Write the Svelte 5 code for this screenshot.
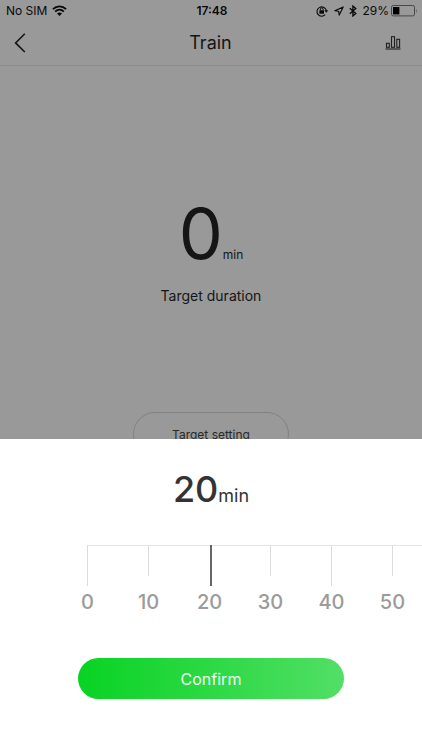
<script>
  const values = [0, 10, 20, 30, 40, 50];
  const spacing = 61;
  let minutes = $state(20);
  let offset = $derived((minutes / 10) * spacing + 32);
</script>

<div class="screen">
  <div class="status">
    <div class="carrier">
      <span>No SIM</span>
      <svg width="15" height="11" viewBox="0 0 15 11" fill="none" stroke="#090909" stroke-width="1.9" aria-hidden="true">
        <path d="M0.9 4.1C4.7 .4 10.3 .4 14.1 4.1" />
        <path d="M3.2 6.6C5.7 4.2 9.3 4.2 11.8 6.6" />
        <path d="M5 8.6Q7.5 6.5 10 8.6L7.5 11Z" fill="#090909" stroke="none" />
      </svg>
    </div>
    <strong>17:48</strong>
    <div class="indicators">
      <svg width="13" height="12" viewBox="0 0 13 12" fill="none" stroke="#090909" aria-hidden="true">
        <path d="M9.2 9.7A4.7 4.7 0 1 1 10.2 5.2" stroke-width="1.1" />
        <path d="M8.4 5.2H12.2L10.3 7.8Z" fill="#090909" stroke="none" />
        <rect x="3.4" y="5.3" width="4.6" height="3.4" fill="#090909" stroke="none" />
        <path d="M4.4 5.5V4.2a1.3 1.3 0 0 1 2.6 0V5.5" />
      </svg>
      <svg width="10" height="10" viewBox="0 0 10 10" fill="none" stroke="#090909" stroke-width="1.1" stroke-linejoin="round" aria-hidden="true">
        <path d="M9.2 .9L.8 4.8L4.6 5.2L5.2 9.1Z" />
      </svg>
      <svg width="8" height="12" viewBox="0 0 8 12" fill="none" stroke="#090909" stroke-width="1.3" aria-hidden="true">
        <path d="M.8 3.2L6.8 8.6L3.9 11V1L6.8 3.4L.8 8.8" />
      </svg>
      <span class="charge">29%</span>
      <svg width="27" height="12" viewBox="0 0 27 12" aria-hidden="true">
        <rect x=".5" y=".5" width="23" height="10.4" rx="1.8" fill="none" stroke="#484848" />
        <rect x="2" y="2" width="6.4" height="7.4" fill="#000" />
        <path d="M25 4V7.8Q26.4 5.9 25 4Z" fill="#484848" />
      </svg>
    </div>
  </div>

  <header>
    <button class="icon" aria-label="Back">
      <svg width="12" height="20" viewBox="0 0 12 20" fill="none" stroke="#151515" stroke-width="1.6" aria-hidden="true">
        <path d="M10.8 .8L1.6 9.9L10.8 19" />
      </svg>
    </button>
    <h1>Train</h1>
    <button class="icon" aria-label="Statistics">
      <svg width="16" height="14" viewBox="0 0 16 14" fill="none" stroke="#202020" stroke-width="1.1" aria-hidden="true">
        <path d="M.5 13H15.5" />
        <rect x="1.5" y="7.3" width="2.8" height="4" />
        <rect x="6.5" y=".7" width="3" height="10.6" />
        <rect x="11.8" y="3.3" width="2.8" height="8" />
      </svg>
    </button>
  </header>

  <main>
    <div class="total"><span class="zero">0</span><span class="unit">min</span></div>
    <p>Target duration</p>
    <button class="setting">Target setting</button>
  </main>

  <section class="sheet" aria-label="Target setting">
    <div class="chosen"><span class="number">{minutes}</span><span class="suffix">min</span></div>
    <div class="ruler">
      <ol style="margin-left: calc(50% - {offset}px)">
        {#each values as value}
          <li class:long={value % 40 === 0} class:current={value === minutes}>{value}</li>
        {/each}
      </ol>
      <span class="marker"></span>
      <input type="range" min="0" max="50" step="10" bind:value={minutes} aria-label="Target duration in minutes" />
    </div>
    <button class="confirm">Confirm</button>
  </section>
</div>

<style>
  :global(body) {
    margin: 0;
    background: #999;
  }

  .screen {
    display: flex;
    flex-direction: column;
    min-height: 100vh;
    font-family: Inter, "Liberation Sans", sans-serif;
    color: #151515;
    background: #999;
    overflow: hidden;
  }

  button {
    font: inherit;
    color: inherit;
    cursor: pointer;
  }

  svg {
    display: block;
  }

  .status {
    display: grid;
    grid-template-columns: 1fr auto 1fr;
    align-items: center;
    height: 21px;
    padding: 0 4px 1px 6px;
    font-size: 12px;
    color: #090909;
  }

  .status strong {
    font-weight: 600;
  }

  .carrier,
  .indicators {
    display: flex;
    align-items: center;
    gap: 5px;
  }

  .indicators {
    justify-content: flex-end;
  }

  .charge {
    margin-right: -3px;
  }

  header {
    display: flex;
    align-items: center;
    justify-content: space-between;
    height: 43px;
    padding: 0 8px 0 7px;
    border-bottom: 1px solid #8b8b8b;
  }

  .icon {
    display: grid;
    place-items: center;
    width: 26px;
    height: 40px;
    margin-bottom: 2px;
    padding: 0;
    border: 0;
    background: none;
  }

  .icon:last-child {
    width: 42px;
  }

  .icon:first-child {
    margin-right: 16px;
  }

  h1 {
    margin: 0 0 2px;
    font-size: 18px;
    font-weight: 400;
  }

  main {
    display: flex;
    flex-direction: column;
    align-items: center;
    padding-top: 128px;
  }

  .total {
    display: flex;
    align-items: baseline;
    line-height: 80px;
  }

  .zero {
    font-size: 70px;
  }

  .unit {
    font-size: 12px;
    line-height: 16px;
  }

  p {
    margin: 13px 0 0;
    font-size: 14px;
    line-height: 18px;
  }

  .setting {
    width: 156px;
    height: 44px;
    margin-top: 107px;
    padding: 0;
    border: 1px solid #828286;
    border-radius: 22px;
    background: none;
    font-size: 12px;
    color: #292929;
  }

  .sheet {
    position: fixed;
    inset: auto 0 0;
    display: flex;
    flex-direction: column;
    align-items: center;
    padding: 28px 0 51px;
    background: #fff;
    color: #333;
  }

  .chosen {
    display: flex;
    align-items: baseline;
    line-height: 44px;
  }

  .number {
    font-size: 36px;
    font-weight: 500;
  }

  .suffix {
    font-size: 18px;
  }

  .ruler {
    position: relative;
    width: 100%;
    margin: 27px 0 44px;
    overflow: hidden;
  }

  ol {
    display: flex;
    padding: 0;
    margin: 0;
    list-style: none;
  }

  li {
    display: flex;
    flex: 0 0 61px;
    flex-direction: column;
    align-items: center;
    font-size: 20px;
    font-weight: 500;
    line-height: 24px;
    color: #9b9b9b;
    background: linear-gradient(#e6e6e6, #e6e6e6) right top / 100% 1px no-repeat;
  }

  li:first-child {
    background-size: 31px 1px;
  }

  li::before {
    content: "";
    width: 1px;
    height: 31px;
    margin-bottom: 14px;
    background: #dcdcdc;
  }

  .long::before {
    height: 41px;
    margin-bottom: 4px;
  }

  .current::before {
    background: none;
  }

  .marker {
    position: absolute;
    top: 0;
    left: calc(50% - 1px);
    width: 2px;
    height: 41px;
    background: #666;
  }

  input {
    position: absolute;
    inset: 0;
    width: 100%;
    height: 100%;
    margin: 0;
    opacity: 0;
    cursor: pointer;
  }

  .confirm {
    width: 63%;
    height: 41px;
    padding: 0;
    border: 0;
    border-radius: 21px;
    background: linear-gradient(90deg, #08d323, #52df66);
    color: #f2fff3;
    font-size: 16px;
  }
</style>
